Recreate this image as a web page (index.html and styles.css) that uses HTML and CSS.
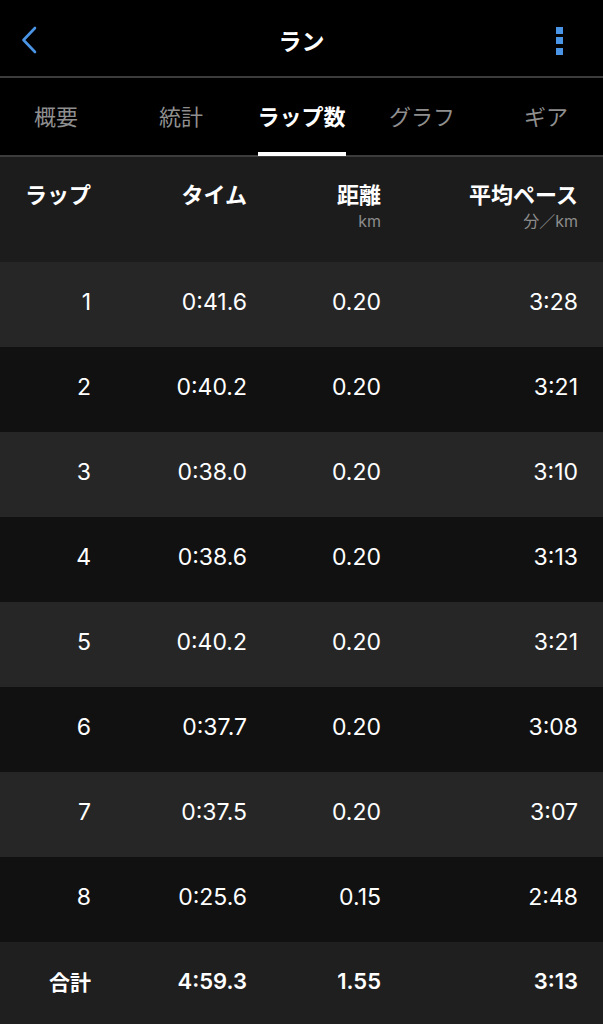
FILE: index.html
```html
<!DOCTYPE html>
<html lang="ja">
<head>
<meta charset="utf-8">
<link rel="stylesheet" href="styles.css">
</head>
<body>
<div class="app">
  <header class="topbar">
    <svg class="back" width="18" height="28" viewBox="0 0 18 28"><path d="M15 2 L3.5 14 L15 26" fill="none" stroke="#4a95e6" stroke-width="2.6" stroke-linecap="round" stroke-linejoin="round"/></svg>
    <div class="title">ラン</div>
    <div class="more"><span></span><span></span><span></span></div>
  </header>
  <nav class="tabs">
    <div class="tab">概要</div>
    <div class="tab">統計</div>
    <div class="tab active">ラップ数</div>
    <div class="tab">グラフ</div>
    <div class="tab">ギア</div>
  </nav>
  <div class="thead row">
    <div class="cell"><div class="h">ラップ</div></div>
    <div class="cell"><div class="h">タイム</div></div>
    <div class="cell"><div class="h">距離</div><div class="sub">km</div></div>
    <div class="cell"><div class="h">平均ペース</div><div class="sub">分／km</div></div>
  </div>
  <div class="row lap odd"><div class="cell">1</div><div class="cell">0:41.6</div><div class="cell">0.20</div><div class="cell">3:28</div></div>
  <div class="row lap even"><div class="cell">2</div><div class="cell">0:40.2</div><div class="cell">0.20</div><div class="cell">3:21</div></div>
  <div class="row lap odd"><div class="cell">3</div><div class="cell">0:38.0</div><div class="cell">0.20</div><div class="cell">3:10</div></div>
  <div class="row lap even"><div class="cell">4</div><div class="cell">0:38.6</div><div class="cell">0.20</div><div class="cell">3:13</div></div>
  <div class="row lap odd"><div class="cell">5</div><div class="cell">0:40.2</div><div class="cell">0.20</div><div class="cell">3:21</div></div>
  <div class="row lap even"><div class="cell">6</div><div class="cell">0:37.7</div><div class="cell">0.20</div><div class="cell">3:08</div></div>
  <div class="row lap odd"><div class="cell">7</div><div class="cell">0:37.5</div><div class="cell">0.20</div><div class="cell">3:07</div></div>
  <div class="row lap even"><div class="cell">8</div><div class="cell">0:25.6</div><div class="cell">0.15</div><div class="cell">2:48</div></div>
  <div class="row lap total"><div class="cell">合計</div><div class="cell">4:59.3</div><div class="cell">1.55</div><div class="cell">3:13</div></div>
</div>
</body>
</html>
```
FILE: styles.css
```css
* { box-sizing: border-box; }
html, body { margin: 0; padding: 0; background: #000; }
body {
  font-family: "Inter", "Noto Sans CJK JP", sans-serif;
  color: #fff;
  width: 603px;
  height: 1024px;
  overflow: hidden;
}
.topbar {
  height: 78px;
  display: flex;
  align-items: center;
  justify-content: space-between;
  padding: 0 40px 0 20px;
  position: relative;
  border-bottom: 2px solid #3c3c3c;
}
.title {
  position: absolute;
  left: 0; right: 0;
  text-align: center;
  font-size: 23px;
  font-weight: 700;
  top: 25px;
  line-height: 34px;
}
.back { display: block; margin-top: 3px; }
.more { display: flex; flex-direction: column; gap: 3.5px; margin-top: 5px; }
.more span { width: 7px; height: 7px; background: #4a95e6; display: block; }
.tabs {
  display: grid;
  grid-template-columns: repeat(5, 1fr);
  height: 79px;
  border-bottom: 2px solid #3c3c3c;
}
.tab {
  display: flex;
  align-items: center;
  justify-content: center;
  font-size: 22px;
  color: #8f8f8f;
  position: relative;
  padding-bottom: 3px;
}
.tab:first-child { justify-content: flex-start; padding-left: 34px; }
.tab:last-child { justify-content: flex-end; padding-right: 35px; }
.tab.active { color: #fff; font-weight: 700; }
.tab.active::after {
  content: "";
  position: absolute;
  left: 17px; right: 16px;
  bottom: -1px;
  height: 4px;
  background: #fff;
}
.row {
  display: grid;
  grid-template-columns: 91px 156px 134px 1fr;
  padding-right: 25px;
  text-align: right;
}
.thead {
  background: #1c1c1c;
  height: 105px;
  padding-top: 24px;
  align-items: start;
}
.h { font-size: 22px; font-weight: 700; line-height: 28px; }
.sub { font-size: 16px; color: #8c8c8c; line-height: 20px; margin-top: 2px; }
.lap {
  height: 85px;
  align-items: center;
  font-size: 23px;
  padding-bottom: 6px;
}
.odd { background: #262626; }
.even { background: #111111; }
.total { background: #1f1f1f; font-weight: 600; font-size: 22px; height: 82px; padding-bottom: 4px; }
.total .cell:first-child { font-size: 21px; font-weight: 700; }
```
